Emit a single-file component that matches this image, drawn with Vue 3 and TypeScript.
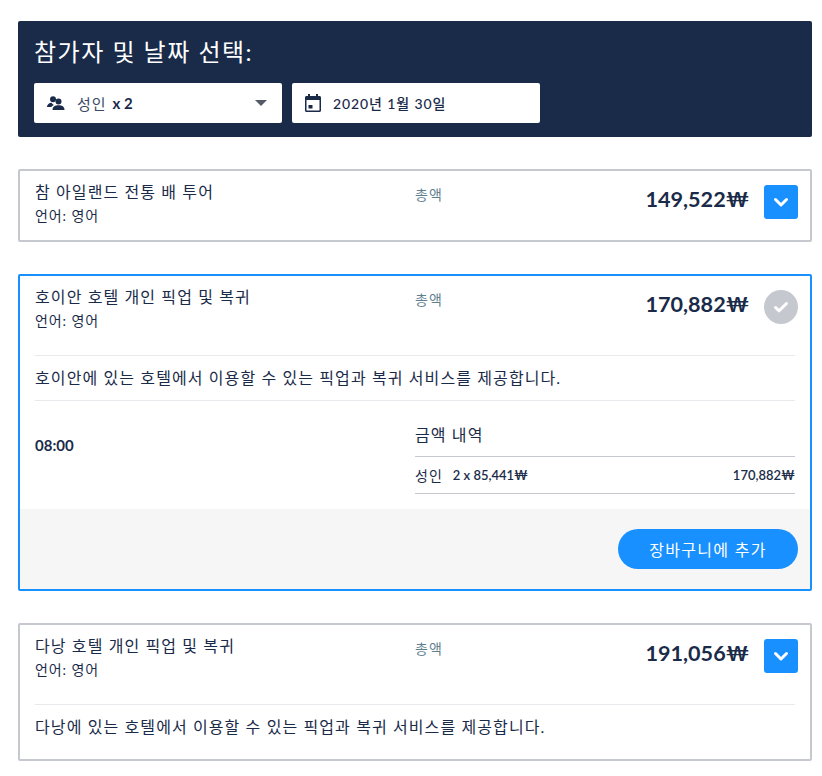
<script setup lang="ts">
interface Line { label: string; value: string }
const chevron = 'M3.5 6.5 L9 12 L14.500 6.5'
const note: Line = { label: '성인', value: '2 x 85,441₩' }
</script>

<template>
  <main class="page">
    <section class="selector">
      <h2>참가자 및 날짜 선택:</h2>
      <div class="fields">
        <div class="field people">
          <svg width="18" height="14" viewBox="0 0 18 14"><circle cx="6" cy="3.200" r="3" fill="#1a2b49"/><path d="M0 11c0-2.800 2.200-4 4.600-4.200 1 1.400 1.600 1.800 2.400 2.200-1.400.6-2.400 1.500-2.600 2z" fill="#1a2b49"/><circle cx="11.500" cy="5.500" r="3" fill="#1a2b49"/><path d="M5.500 14c0-3.400 2.600-4.700 6-4.700s6 1.300 6 4.700z" fill="#1a2b49"/></svg>
          <span class="ko">성인</span><b>x 2</b>
          <i class="caret"></i>
        </div>
        <div class="field date">
          <svg width="16" height="18" viewBox="0 0 16 18"><path d="M3 0h2v2h6V0h2v2h1.500C15.300 2 16 2.700 16 3.500v13c0 .8-.7 1.500-1.500 1.500h-13C.7 18 0 17.300 0 16.500v-13C0 2.700.7 2 1.500 2H3zM1.500 6v10.500h13V6z" fill="#1a2b49"/><rect x="3.500" y="11" width="4" height="3.500" fill="#1a2b49"/></svg>
          <span class="datetext">2020년 1월 30일</span>
        </div>
      </div>
    </section>

    <article class="card">
      <div class="top">
        <div class="title"><h3>참 아일랜드 전통 배 투어</h3><p>언어: 영어</p></div>
        <span class="total">총액</span>
        <strong>149,522₩</strong>
        <button class="toggle" aria-label="열기"><svg width="18" height="18" viewBox="0 0 18 18"><path :d="chevron" fill="none" stroke="#fff" stroke-width="3" stroke-linecap="round" stroke-linejoin="round"/></svg></button>
      </div>
    </article>

    <article class="card active">
      <div class="top">
        <div class="title"><h3>호이안 호텔 개인 픽업 및 복귀</h3><p>언어: 영어</p></div>
        <span class="total">총액</span>
        <strong>170,882₩</strong>
        <span class="done"><svg width="18" height="18" viewBox="0 0 18 18"><path d="M3.500 9.500l3.600 3.300L14.500 5.500" fill="none" stroke="#fff" stroke-width="3" stroke-linecap="round" stroke-linejoin="round"/></svg></span>
      </div>
      <p class="desc">호이안에 있는 호텔에서 이용할 수 있는 픽업과 복귀 서비스를 제공합니다.</p>
      <div class="detail">
        <div class="time">08:00</div>
        <div class="price">
          <h4>금액 내역</h4>
          <div class="row"><span class="ko">{{ note.label }}</span><b>{{ note.value }}</b><b class="end">170,882₩</b></div>
        </div>
      </div>
      <footer><button class="add">장바구니에 추가</button></footer>
    </article>

    <article class="card">
      <div class="top">
        <div class="title"><h3>다낭 호텔 개인 픽업 및 복귀</h3><p>언어: 영어</p></div>
        <span class="total">총액</span>
        <strong>191,056₩</strong>
        <button class="toggle" aria-label="열기"><svg width="18" height="18" viewBox="0 0 18 18"><path :d="chevron" fill="none" stroke="#fff" stroke-width="3" stroke-linecap="round" stroke-linejoin="round"/></svg></button>
      </div>
      <p class="desc lastdesc">다낭에 있는 호텔에서 이용할 수 있는 픽업과 복귀 서비스를 제공합니다.</p>
    </article>
  </main>
</template>

<style>
html, body { background: #fff; }
</style>

<style scoped>
.page { width: 794px; padding: 21px 10px 16px 18px; font-family: Lato, "Noto Sans CJK KR", sans-serif; color: #1a2b49; }
.selector { background: #1a2b49; height: 116px; box-sizing: border-box; padding: 14px 16px; border-radius: 2px; }
.selector h2 { margin: 0 0 14px; font-size: 24px; line-height: 34px; font-weight: 400; letter-spacing: 1.5px; color: #fff; }
.fields { display: flex; gap: 10px; }
.field { width: 248px; height: 40px; background: #fff; border-radius: 2px; display: flex; align-items: center; box-sizing: border-box; padding: 0 13px; font-size: 14px; }
.people svg { margin-right: 12px; }
.people .ko { margin-right: 6px; letter-spacing: 1px; font-size: 15px; color: #3a4a66; }
.people b { font-weight: 700; font-size: 15px; }
.caret { margin-left: auto; margin-right: 2px; border: 6.500px solid transparent; border-top-color: #555b66; border-bottom: 0; }
.date svg { margin-right: 12px; }
.datetext { font-weight: 500; letter-spacing: .9px; }
.card { border: 2px solid #c6c8cf; border-radius: 2px; margin-top: 32px; }
.top { height: 69px; box-sizing: border-box; padding: 0 12px 0 15px; display: grid; grid-template-columns: 380px 1fr auto 34px; align-items: start; }
.title h3 { margin: 9px 0 0; font-size: 16px; line-height: 24px; font-weight: 400; letter-spacing: 1.100px; white-space: nowrap; }
.title p { margin: 2px 0 0; font-size: 14px; line-height: 20px; letter-spacing: .9px; }
.total { margin-top: 14px; font-size: 14px; line-height: 20px; letter-spacing: 1px; color: #5f7f8f; }
strong { grid-column: 3; margin: 13px 15px 0 0; font-size: 21.6px; line-height: 30px; font-weight: 700; }
.toggle { grid-column: 4; margin-top: 14px; width: 34px; height: 34px; background: #1890ff; border: 0; border-radius: 3px; padding: 0; display: flex; align-items: center; justify-content: center; }
.done { grid-column: 4; margin-top: 14px; width: 34px; height: 34px; background: #c6c8d0; border-radius: 50%; display: flex; align-items: center; justify-content: center; }
.active { border-color: #1890ff; }
.desc { margin: 10px 15px 0; border-top: 1px solid #e8e9ec; border-bottom: 1px solid #e8e9ec; padding: 11px 0 12px; font-size: 16px; line-height: 21px; letter-spacing: 1.100px; }
.detail { display: flex; padding: 0 15px; height: 108px; }
.time { width: 380px; font-weight: 700; font-size: 15px; padding-top: 35px; }
.price { flex: 1; }
.price h4 { margin: 22px 0 0; font-weight: 400; font-size: 16px; line-height: 24px; letter-spacing: 1.100px; padding-bottom: 9px; border-bottom: 1px solid #c6c8cf; }
.row { display: flex; align-items: center; height: 36px; font-size: 13px; border-bottom: 1px solid #c6c8cf; }
.row .ko { font-size: 14px; letter-spacing: 1px; margin-right: 10px; }
.row b { font-weight: 600; }
.row .end { margin-left: auto; }
footer { background: #f6f6f6; height: 80px; display: flex; align-items: center; justify-content: flex-end; padding-right: 12px; }
.add { width: 180px; height: 40px; border-radius: 20px; background: #1890ff; color: #fff; border: 0; font: 400 16px Lato, "Noto Sans CJK KR", sans-serif; letter-spacing: 1.300px; }
.lastdesc { border-bottom: 0; margin-top: 10px; padding-bottom: 22px; }
</style>
